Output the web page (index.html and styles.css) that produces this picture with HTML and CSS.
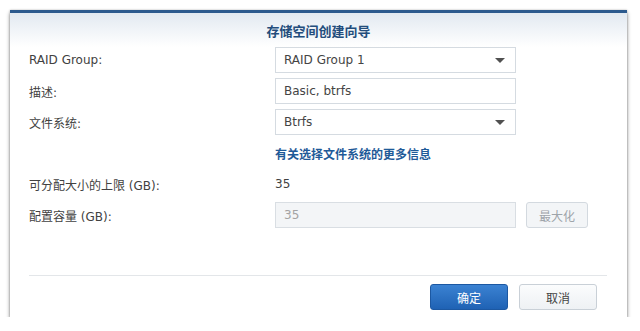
FILE: index.html
```html
<!DOCTYPE html>
<html lang="zh-CN">
<head>
    <meta charset="UTF-8">
    <title>存储空间创建向导</title>
    <link rel="stylesheet" href="styles.css">
</head>
<body>

<div class="dialog">
    <!-- Title bar -->
    <div class="dialog-header">存储空间创建向导</div>

    <!-- Form -->
    <div class="form">
        <div class="row">
            <div class="label">RAID Group:</div>
            <div class="field select">
                <span>RAID Group 1</span>
                <span class="arrow"></span>
            </div>
        </div>

        <div class="row">
            <div class="label">描述:</div>
            <div class="field">Basic, btrfs</div>
        </div>

        <div class="row">
            <div class="label">文件系统:</div>
            <div class="field select">
                <span>Btrfs</span>
                <span class="arrow"></span>
            </div>
        </div>

        <div class="row">
            <div class="label"></div>
            <a class="link" href="#">有关选择文件系统的更多信息</a>
        </div>

        <div class="row">
            <div class="label">可分配大小的上限 (GB):</div>
            <div class="value">35</div>
        </div>

        <div class="row">
            <div class="label">配置容量 (GB):</div>
            <div class="field disabled">35</div>
            <button class="btn btn-small" disabled>最大化</button>
        </div>
    </div>

    <!-- Footer buttons -->
    <div class="dialog-footer">
        <button class="btn btn-primary">确定</button>
        <button class="btn">取消</button>
    </div>
</div>

</body>
</html>
```

FILE: styles.css
```css
/* General Reset */
* {
    margin: 0;
    padding: 0;
    box-sizing: border-box;
}

body {
    font-family: 'DejaVu Sans', Verdana, 'Noto Sans CJK SC', sans-serif;
    font-size: 12px;
    color: #414141;
    background-color: #fff;
    padding: 10px 0 0 10px;
}

/* Dialog container */
.dialog {
    width: 617px;
    height: 307px;
    background-color: #fff;
    border-top: 3px solid #2c5a8e;
    box-shadow: 0 3px 4px rgba(0, 0, 0, 0.45), 0 0 2px rgba(0, 0, 0, 0.25);
    display: flex;
    flex-direction: column;
}

.dialog-header {
    height: 34px;
    padding-top: 8px;
    text-align: center;
    font-family: 'Noto Sans CJK SC', sans-serif;
    font-size: 13px;
    font-weight: bold;
    color: #234d7c;
    background: linear-gradient(to bottom, #e2e9f1, #ffffff);
}

/* Form rows */
.form {
    display: flex;
    flex-direction: column;
    gap: 5px;
    padding-left: 19px;
}

.row {
    display: flex;
    align-items: center;
    height: 26px;
}

.label {
    width: 246px;
    flex-shrink: 0;
}

.field {
    width: 241px;
    height: 26px;
    border: 1px solid #d5dbe1;
    padding: 0 8px;
    display: flex;
    align-items: center;
    justify-content: space-between;
    color: #444;
}

.arrow {
    width: 0;
    height: 0;
    margin-right: 2px;
    border-left: 5px solid transparent;
    border-right: 5px solid transparent;
    border-top: 5px solid #505050;
}

.field.disabled {
    background-color: #f3f5f7;
    border-color: #d9dee3;
    color: #a3a3a3;
}

.link {
    font-family: 'Noto Sans CJK SC', sans-serif;
    font-weight: bold;
    color: #1f5a98;
    text-decoration: none;
}

/* Buttons */
.btn {
    font-family: 'Noto Sans CJK SC', sans-serif;
    font-size: 12px;
    width: 78px;
    height: 26px;
    border: 1px solid #c9d0d7;
    border-radius: 3px;
    background: linear-gradient(to bottom, #fbfcfd, #eef1f4);
    color: #444;
}

.btn-small {
    width: 62px;
    margin-left: 10px;
    color: #9ea4aa;
    background: #f3f5f7;
    border-color: #d3d9df;
}

.btn-primary {
    background: linear-gradient(to bottom, #3b82d2, #1f62b4);
    border-color: #1c58a2;
    color: #fff;
}

.dialog-footer {
    margin: auto 20px 7px 19px;
    padding: 8px 10px 0 0;
    border-top: 1px solid #e3e6e9;
    display: flex;
    justify-content: flex-end;
    gap: 11px;
}
```
